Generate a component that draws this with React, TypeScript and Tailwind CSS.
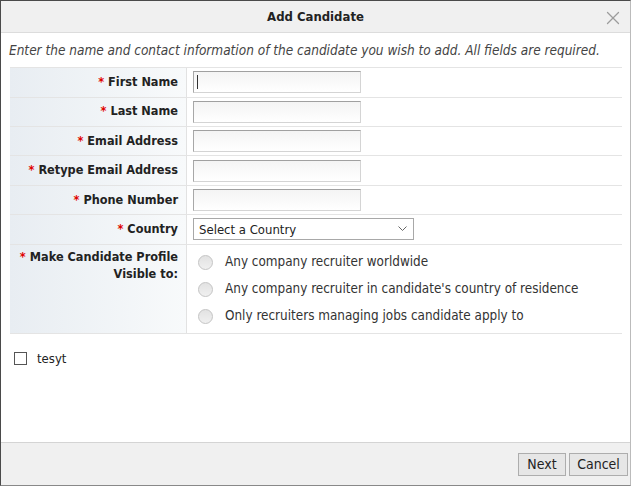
import { X } from "lucide-react";

const font = { fontFamily: '"DejaVu Sans Condensed", "Liberation Sans", sans-serif' };

const labelCell =
  "flex w-[177px] shrink-0 justify-end border-r border-[#e2e2e2] bg-gradient-to-r from-[#e8edf2] to-[#f8fafb] pr-[8px] text-[12.6px] font-bold text-[#222]";

function TextRow({ label, focused }: { label: string; focused?: boolean }) {
  return (
    <div className="flex h-[29.4px] border-t border-[#e4e4e4]">
      <div className={`${labelCell} items-center`}>
        <span className="mr-[4px] text-[#e00000]">*</span>
        {label}
      </div>
      <div className="flex items-center pl-[6px]">
        <div className="flex h-[22px] w-[168px] items-center border border-t-[#a0a0a0] border-l-[#a8a8a8] border-r-[#d4d4d4] border-b-[#d4d4d4] bg-gradient-to-b from-[#f4f4f4] to-white pl-[3px]">
          {focused && <div className="h-[14px] w-px bg-[#333]" />}
        </div>
      </div>
    </div>
  );
}

function Radio({ text }: { text: string }) {
  return (
    <div className="flex h-[27px] items-center">
      <div className="h-[15px] w-[15px] rounded-full border border-[#c4c4c4] bg-gradient-to-b from-[#e2e2e2] to-[#f0f0f0]" />
      <span className="ml-[12px] text-[13.4px] text-[#333]">{text}</span>
    </div>
  );
}

export default function App() {
  return (
    <div
      className="flex h-[486px] w-[631px] flex-col border-l border-t border-[#4a4a4a] border-r border-r-[#bbb] border-b border-b-[#888] bg-white"
      style={font}
    >
      <div className="relative flex h-[32px] shrink-0 items-center justify-center border-b border-[#dcdcdc] bg-[#f0f0f0]">
        <span className="text-[13px] font-bold text-[#222]">Add Candidate</span>
        <X className="absolute right-[6px] top-[6px] h-[22px] w-[22px] text-[#9c9c9c]" strokeWidth={1.4} />
      </div>

      <div className="px-[8px] pt-[7px] text-[13.5px] italic text-[#444]">
        Enter the name and contact information of the candidate you wish to add. All fields are required.
      </div>

      <div className="mx-[9px] mt-[7px] w-[612px] border-b border-[#e4e4e4]">
        <TextRow label="First Name" focused />
        <TextRow label="Last Name" />
        <TextRow label="Email Address" />
        <TextRow label="Retype Email Address" />
        <TextRow label="Phone Number" />
        <div className="flex h-[29.4px] border-t border-[#e4e4e4]">
          <div className={`${labelCell} items-center`}>
            <span className="mr-[4px] text-[#e00000]">*</span>
            Country
          </div>
          <div className="flex items-center pl-[6px]">
            <div className="flex h-[22px] w-[221px] items-center justify-between border border-[#a8a8a8] bg-white pl-[5px] pr-[6px] text-[13px] text-[#222]">
              <span>Select a Country</span>
              <svg width="9" height="6" viewBox="0 0 9 6" fill="none" stroke="#666" strokeWidth="1">
                <path d="M0.5 0.5 L4.5 4.5 L8.5 0.5" />
              </svg>
            </div>
          </div>
        </div>
        <div className="flex h-[89px] border-t border-[#e4e4e4]">
          <div className={`${labelCell} pt-[3px]`}>
            <span className="text-right leading-[17px]">
              <span className="mr-[4px] text-[#e00000]">*</span>
              Make Candidate Profile
              <br />
              Visible to:
            </span>
          </div>
          <div className="flex flex-col pl-[11px] pt-[4px]">
            <Radio text="Any company recruiter worldwide" />
            <Radio text="Any company recruiter in candidate's country of residence" />
            <Radio text="Only recruiters managing jobs candidate apply to" />
          </div>
        </div>
      </div>

      <div className="ml-[13px] mt-[15px] flex items-center">
        <div className="h-[13px] w-[13px] border border-[#555] bg-white" />
        <span className="ml-[10px] text-[13px] text-[#222]">tesyt</span>
      </div>

      <div className="mt-auto flex h-[43px] shrink-0 items-center justify-end gap-[3px] border-t border-[#d4d4d4] bg-[#f0f0f0] pr-[2px]">
        <button className="h-[23px] w-[48px] border border-[#adadad] bg-[#e6e6e6] text-[14px] text-[#222]">Next</button>
        <button className="h-[23px] w-[59px] border border-[#adadad] bg-[#e6e6e6] text-[14px] text-[#222]">Cancel</button>
      </div>
    </div>
  );
}
